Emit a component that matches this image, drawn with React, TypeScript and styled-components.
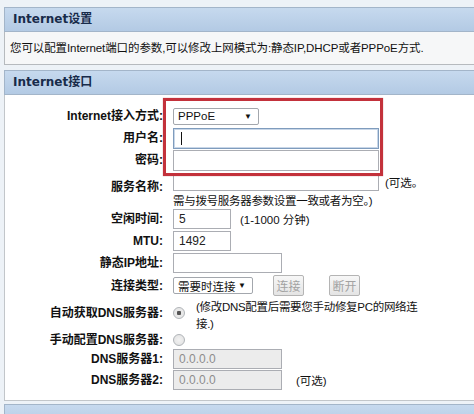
import React from "react";
import styled, { createGlobalStyle } from "styled-components";

const GlobalStyle = createGlobalStyle`
  html, body {
    margin: 0;
    padding: 0;
    background: #edf2f7;
    overflow: hidden;
  }
  body {
    font-family: "Liberation Sans", "Noto Sans CJK SC", sans-serif;
    color: #111;
  }
`

const Page = styled.div`
  width: 474px;
  height: 414px;
  padding: 7px 0 0 4px;
  box-sizing: border-box;
  overflow: hidden;
`

const Section = styled.section`
  margin-right: -8px;
`

const SectionHeader = styled.div`
  height: 25px;
  box-sizing: border-box;
  border: 1px solid #a3b5c9;
  background: linear-gradient(#c6d9ee, #b3cae4);
  padding-left: 8px;
  line-height: 23px;
  font-family: "DejaVu Sans", "Noto Sans CJK SC", sans-serif;
  font-weight: bold;
  font-size: 12px;
  color: #182b4a;
`

const Description = styled.div`
  height: 33px;
  box-sizing: border-box;
  border: 1px solid #b6babe;
  border-top: none;
  background: #f6f7f8;
  padding-left: 5px;
  line-height: 32px;
  font-size: 11.5px;
  letter-spacing: -0.1px;
`

const Gap = styled.div<{ $h: number }>`
  height: ${(p) => p.$h}px;
`

const FormBody = styled.div`
  position: relative;
  height: 306px;
  box-sizing: border-box;
  border: 1px solid #c2c6ca;
  border-top: none;
  background: #fff;
  padding-top: 10px;
`

const Row = styled.div<{ $h: number; $top?: boolean }>`
  display: flex;
  height: ${(p) => p.$h}px;
  align-items: ${(p) => (p.$top ? "flex-start" : "center")};
`

const Label = styled.div<{ $pad?: number }>`
  width: 158px;
  flex-shrink: 0;
  text-align: right;
  font-weight: bold;
  font-size: 12px;
  line-height: 16px;
  padding-top: ${(p) => p.$pad ?? 0}px;
  white-space: nowrap;
`

const Field = styled.div<{ $col?: boolean; $top?: boolean }>`
  margin-left: 10px;
  display: flex;
  flex-direction: ${(p) => (p.$col ? "column" : "row")};
  align-items: ${(p) => (p.$col || p.$top ? "flex-start" : "center")};
`

const TextBox = styled.div<{ $w: number; $h: number; $off?: boolean; $focus?: boolean }>`
  position: relative;
  width: ${(p) => p.$w}px;
  height: ${(p) => p.$h}px;
  flex-shrink: 0;
  box-sizing: border-box;
  border: 1px solid ${(p) => (p.$focus ? "#7f9cbd" : "#abadb3")};
  box-shadow: ${(p) => (p.$focus ? "inset 0 0 0 1px #c9d7e8" : "none")};
  background: ${(p) => (p.$off ? "#ececec" : "#fff")};
  color: ${(p) => (p.$off ? "#8c8c8c" : "#222")};
  font-size: 12px;
  line-height: ${(p) => p.$h - 2}px;
  padding-left: 5px;
`

const Caret = styled.span`
  position: absolute;
  left: 7px;
  top: 3px;
  bottom: 3px;
  width: 1px;
  background: #111;
`

const Dropdown = styled.div<{ $w: number }>`
  width: ${(p) => p.$w}px;
  height: 17px;
  flex-shrink: 0;
  box-sizing: border-box;
  border: 1px solid #a3a7ad;
  border-radius: 2px;
  background: #fff;
  display: flex;
  align-items: center;
  justify-content: space-between;
  padding: 0 6px 0 4px;
  font-size: 11.5px;
  white-space: nowrap;
  overflow: hidden;
`

const Arrow = styled.span`
  font-size: 8px;
  color: #111;
`

const Hint = styled.span<{ $ml: number }>`
  margin-left: ${(p) => p.$ml}px;
  font-size: 11.5px;
  white-space: nowrap;
`

const Note = styled.div`
  margin-top: 1px;
  font-size: 11.5px;
  line-height: 16px;
  white-space: nowrap;
  letter-spacing: -0.3px;
`

const Button = styled.button<{ $ml: number }>`
  margin-left: ${(p) => p.$ml}px;
  width: 31px;
  height: 21px;
  padding: 0;
  flex-shrink: 0;
  border: 1px solid #b4b4b4;
  border-radius: 2px;
  background: linear-gradient(#f7f7f7, #e4e4e4);
  color: #a2a2a2;
  font-family: "Liberation Sans", "Noto Sans CJK SC", sans-serif;
  font-size: 12px;
`

const Radio = styled.span<{ $on?: boolean; $mt?: number }>`
  margin-top: ${(p) => p.$mt ?? 0}px;
  width: 12px;
  height: 12px;
  box-sizing: border-box;
  border-radius: 50%;
  border: 1px solid #b0b4b8;
  background: radial-gradient(circle, ${(p) => (p.$on ? "#555 0 2px, #e8e8e8 2.5px" : "#f2f2f2 0, #e0e0e0 100%")});
  flex-shrink: 0;
`

const RadioNote = styled.div`
  margin-left: 11px;
  padding-top: 2px;
  font-size: 11.5px;
  line-height: 17px;
  white-space: nowrap;
  letter-spacing: -0.3px;
`

const Highlight = styled.div`
  position: absolute;
  left: 158px;
  top: 3px;
  width: 220px;
  height: 78px;
  box-sizing: border-box;
  border: 3px solid #c3313b;
  box-shadow: 0 0 1px rgba(150, 20, 30, 0.5);
  pointer-events: none;
`

const App = (): JSX.Element => {
  return (
    <>
      <GlobalStyle />
      <Page>
        <Section>
          <SectionHeader>Internet设置</SectionHeader>
          <Description>您可以配置Internet端口的参数,可以修改上网模式为:静态IP,DHCP或者PPPoE方式.</Description>
        </Section>
        <Gap $h={5} />
        <Section>
          <SectionHeader>Internet接口</SectionHeader>
          <FormBody>
            <Row $h={22}>
              <Label>Internet接入方式:</Label>
              <Field>
                <Dropdown $w={86}>
                  PPPoE <Arrow>▼</Arrow>
                </Dropdown>
              </Field>
            </Row>
            <Row $h={22}>
              <Label>用户名:</Label>
              <Field>
                <TextBox $w={206} $h={21} $focus>
                  <Caret />
                </TextBox>
              </Field>
            </Row>
            <Row $h={22}>
              <Label>密码:</Label>
              <Field>
                <TextBox $w={206} $h={21} />
              </Field>
            </Row>
            <Row $h={37} $top>
              <Label $pad={8}>服务名称:</Label>
              <Field $col>
                <Row $h={21}>
                  <TextBox $w={206} $h={18} />
                  <Hint $ml={6}>(可选。</Hint>
                </Row>
                <Note>需与拨号服务器参数设置一致或者为空。)</Note>
              </Field>
            </Row>
            <Row $h={22}>
              <Label>空闲时间:</Label>
              <Field>
                <TextBox $w={58} $h={20}>5</TextBox>
                <Hint $ml={9}>(1-1000 分钟)</Hint>
              </Field>
            </Row>
            <Row $h={22}>
              <Label>MTU:</Label>
              <Field>
                <TextBox $w={58} $h={20}>1492</TextBox>
              </Field>
            </Row>
            <Row $h={22}>
              <Label>静态IP地址:</Label>
              <Field>
                <TextBox $w={109} $h={20} />
              </Field>
            </Row>
            <Row $h={23}>
              <Label>连接类型:</Label>
              <Field>
                <Dropdown $w={80}>
                  需要时连接 <Arrow>▼</Arrow>
                </Dropdown>
                <Button $ml={20} disabled>连接</Button>
                <Button $ml={25} disabled>断开</Button>
              </Field>
            </Row>
            <Row $h={34} $top>
              <Label $pad={8}>自动获取DNS服务器:</Label>
              <Field $top>
                <Radio $on $mt={10} />
                <RadioNote>
                  (修改DNS配置后需要您手动修复PC的网络连
                  <br />
                  接.)
                </RadioNote>
              </Field>
            </Row>
            <Row $h={17}>
              <Label>手动配置DNS服务器:</Label>
              <Field>
                <Radio />
              </Field>
            </Row>
            <Row $h={21}>
              <Label>DNS服务器1:</Label>
              <Field>
                <TextBox $w={109} $h={20} $off>0.0.0.0</TextBox>
              </Field>
            </Row>
            <Row $h={22}>
              <Label>DNS服务器2:</Label>
              <Field>
                <TextBox $w={109} $h={20} $off>0.0.0.0</TextBox>
                <Hint $ml={14}>(可选)</Hint>
              </Field>
            </Row>
            <Highlight />
          </FormBody>
        </Section>
        <Gap $h={3} />
        <Section>
          <SectionHeader />
        </Section>
      </Page>
    </>
  );
};

export default App;
